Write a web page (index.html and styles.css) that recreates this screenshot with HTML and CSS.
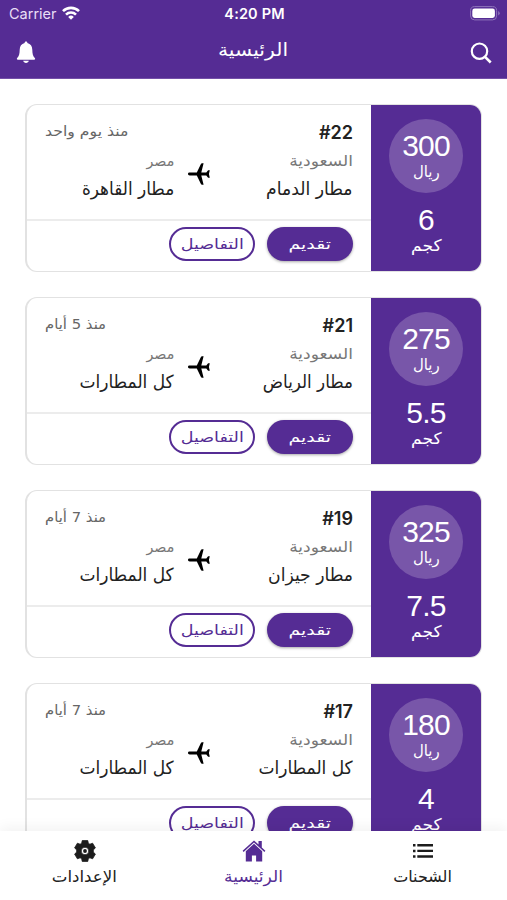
FILE: index.html
```html
<!DOCTYPE html>
<html lang="ar" dir="rtl">
<head>
<meta charset="utf-8">
<title>الرئيسية</title>
<link rel="stylesheet" href="styles.css">
</head>
<body>
<svg width="0" height="0" class="defs" aria-hidden="true">
  <symbol id="plane" viewBox="0 0 24 24"><path d="M1 12c0-.9.7-1.400 1.700-1.400h7.100L13.800 2.200c.3-.6.7-.9 1.300-.9h1.500l-2.300 9.300h5l1.800-2.300h1.700L21.900 12l.9 3.700h-1.700l-1.800-2.300h-5l2.300 9.300h-1.500c-.6 0-1-.3-1.300-.9L9.800 13.400H2.700C1.700 13.400 1 12.900 1 12z"/></symbol>
</svg>
<div class="screen">
  <header class="header">
    <div class="status" dir="ltr">
      <div class="status-side"><span class="carrier">Carrier</span>
        <svg class="wifi" width="18" height="14" viewBox="0 0 18 14"><g fill="none" stroke="#fff" stroke-width="2.600"><path d="M1 5.200a11.300 11.300 0 0 1 16 0"/><path d="M4 8.600a7.100 7.100 0 0 1 10 0"/></g><path d="M9 13.800 6.200 10.900a4 4 0 0 1 5.600 0z" fill="#fff"/></svg>
      </div>
      <span class="time">4:20 PM</span>
      <div class="status-side end">
        <svg width="30" height="15" viewBox="0 0 30 15"><rect x=".6" y=".6" width="26" height="13.300" rx="4" fill="none" stroke="#8f74bb" stroke-width="1"/><rect x="2.300" y="2.600" width="22.600" height="9.300" rx="2.300" fill="#fff"/><path d="M28.200 5v4.500q1.500-.7 1.500-2.250T28.200 5z" fill="#8f74bb"/></svg>
      </div>
    </div>
    <div class="bar" dir="ltr">
      <svg width="20" height="23" viewBox="0 0 20 23" fill="#fff"><path d="M10 .5c.9 0 1.400.6 1.400 1.500 3.200.8 4.800 3.300 4.900 6.700.1 4.300.6 6.400 2.500 8.300.7.8.3 1.700-.7 1.700H1.900c-1 0-1.400-.9-.7-1.700 1.900-1.900 2.400-4 2.500-8.300C3.800 5.300 5.400 2.800 8.600 2c0-.9.500-1.500 1.400-1.500z"/><path d="M7.200 19.700h5.600c-.3 1.400-1.400 2.200-2.800 2.200s-2.500-.8-2.800-2.200z"/></svg>
      <h1 class="title" dir="rtl">الرئيسية</h1>
      <svg width="22" height="22" viewBox="0 0 22 22" fill="none" stroke="#fff" stroke-width="2.200"><circle cx="9.500" cy="9.200" r="7.700"/><path d="m15 14.800 5.700 5.700" stroke-width="2.600"/></svg>
    </div>
  </header>
  <main class="list" id="list"></main>
  <nav class="tabs">
    <a class="tab"><svg width="22" height="22" viewBox="0 0 22 22" fill="#1c1c1c"><path d="M1 4h2.500v2.500H1zM1 9.700h2.500v2.500H1zM1 15.300h2.500v2.500H1zM5.300 4H21v2.400H5.300zM5.300 9.700H21v2.400H5.300zM5.300 15.300H21v2.400H5.300z"/></svg><span class="t-ship">الشحنات</span></a>
    <a class="tab active"><svg width="24" height="22" viewBox="0 0 24 22" fill="#552c94"><path d="M12 .4.600 10.800l1 1.100L12 2.600l10.400 9.300 1-1.100-3.600-3.300V1h-3.300v3.500z"/><path d="m12 3.800-8.200 7.400V21.500h6.100v-6h4.200v6h6.100V11.200z"/></svg><span class="t-home">الرئيسية</span></a>
    <a class="tab"><svg width="22" height="22" viewBox="0 0 22 22"><path fill="#1c1c1c" stroke="#1c1c1c" stroke-width=".8" stroke-linejoin="round" fill-rule="evenodd" d="M8.200.6h5.600l.5 2.700 1.600.9 2.700-1 2.800 4.700-2.100 2v2.200l2.100 2-2.800 4.700-2.700-1-1.600.9-.5 2.700H8.200l-.5-2.700-1.600-.9-2.700 1L.6 14.100l2.100-2V9.900L.6 7.900l2.800-4.700 2.700 1 1.600-.9zM11 7.200a3.800 3.800 0 1 0 0 7.600 3.800 3.800 0 0 0 0-7.600z"/><circle cx="11" cy="11" r="1.900" fill="#1c1c1c"/></svg><span class="t-set">الإعدادات</span></a>
  </nav>
</div>
<script src="app.js"></script>
</body>
</html>
```
FILE: app.js
```js
const trips = [
  { id: 22, price: 300, kg: "6", from: "مطار الدمام", to: "مطار القاهرة", ago: "منذ يوم واحد", k: ["dammam", "cairo", "day"] },
  { id: 21, price: 275, kg: "5.5", from: "مطار الرياض", to: "كل المطارات", ago: "منذ 5 أيام", k: ["riyadh", "all", "days"] },
  { id: 19, price: 325, kg: "7.5", from: "مطار جيزان", to: "كل المطارات", ago: "منذ 7 أيام", k: ["jizan", "all", "days"] },
  { id: 17, price: 180, kg: "4", from: "كل المطارات", to: "كل المطارات", ago: "منذ 7 أيام", k: ["all", "all", "days"] }
];
document.getElementById("list").innerHTML = trips.map(t => `
<article class="card">
  <aside class="panel">
    <div class="circle"><span class="num">${t.price}</span><span class="unit riyal">ريال</span></div>
    <span class="num kg">${t.kg}</span><span class="unit kgm">كجم</span>
  </aside>
  <div class="body">
    <div class="info">
      <div class="from"><b class="id" dir="ltr">#${t.id}</b><span class="country saudi">السعودية</span><span class="airport ${t.k[0]}">${t.from}</span></div>
      <svg class="plane" width="24" height="24"><use href="#plane"/></svg>
      <div class="to"><span class="ago ${t.k[2]}">${t.ago}</span><span class="country egypt">مصر</span><span class="airport ${t.k[1]}">${t.to}</span></div>
    </div>
    <div class="actions"><button class="btn solid"><span>تقديم</span></button><button class="btn outline"><span>التفاصيل</span></button></div>
  </div>
</article>`).join("");
```
FILE: styles.css
```css
* { box-sizing: border-box; }
body { margin: 0; background: #fff; font-family: "DejaVu Sans", sans-serif; color: #222; }
.defs { display: block; }
.screen { width: 507px; height: 900px; display: flex; flex-direction: column; overflow: hidden; }
.header { height: 79px; flex: none; background: #552c94; color: #fff; border-bottom: 1px solid #7450a8; }
.status { height: 27px; display: grid; grid-template-columns: 1fr auto 1fr; align-items: center; padding: 0 7px 0 9px; font: 14.5px/27px Inter, sans-serif; }
.status-side { display: flex; align-items: center; gap: 6px; }
.status-side.end { justify-content: flex-end; }
.carrier { color: #e9def6; }
.wifi { margin-top: -2px; margin-left: -1px; }
.time { font-weight: 600; letter-spacing: .15px; }
.bar { height: 51px; display: flex; align-items: center; justify-content: space-between; padding: 0 15px 0 16px; }
.title { margin: 0; font-size: 18px; font-weight: 400; line-height: 46px; align-self: flex-start; transform: scaleX(1.13); }
.list { flex: 1; min-height: 0; overflow: hidden; padding: 25px 25px 0; display: flex; flex-direction: column; gap: 25px; }
.card { flex: none; width: 457px; height: 168px; display: flex; border: 1px solid #e2e2e2; border-width: 1px 1px 1px 2px; border-radius: 12px; overflow: hidden; background: #fff; }
.panel { width: 110px; flex: none; background: #552c94; color: #fff; display: flex; flex-direction: column; align-items: center; padding-top: 14px; }
.circle { width: 74px; height: 74px; border-radius: 50%; background: #7856a9; display: flex; flex-direction: column; align-items: center; padding-top: 11px; flex: none; }
.num { font: 30px/32px "Liberation Sans", sans-serif; letter-spacing: -.8px; }
.unit { font-size: 16px; line-height: 20px; }
.riyal { transform: scaleX(.93); }
.kgm { transform: scaleX(1.07); }
.num.kg { margin-top: 11px; }
.body { flex: 1; min-width: 0; }
.info { height: 114px; display: grid; grid-template-columns: 142px 24px 1fr; padding: 0 18px; }
.from, .to { display: flex; flex-direction: column; align-items: flex-start; padding-top: 14px; white-space: nowrap; }
.id { font: 600 18px/28px Inter, sans-serif; }
.country { font-size: 15px; line-height: 29px; height: 28px; color: #777; transform-origin: right; }
.airport { font-size: 18px; line-height: 28px; transform-origin: right; }
.saudi { transform: scaleX(1.14); }
.egypt { transform: scaleX(.95); }
.dammam, .jizan { transform: scaleX(.955); }
.riyadh { transform: scaleX(.93); }
.all { transform: scaleX(.945); }
.cairo { transform: scaleX(.94); }
.to { padding-right: 13px; }
.ago { font-size: 14px; line-height: 25px; height: 28px; color: #666; align-self: flex-end; transform-origin: left; }
.day { transform: scaleX(1.12); }
.days { transform: scaleX(1.06); }
.plane { margin-top: 57px; }
.actions { height: 52px; border-top: 2px solid #ececec; display: flex; gap: 12px; padding: 6px 18px; }
.btn { width: 86px; height: 34px; padding: 0; border-radius: 17px; font: 14px/28px "DejaVu Sans", sans-serif; white-space: nowrap; }
.btn span { display: inline-block; }
.solid { border: 0; background: #552c94; color: #fff; box-shadow: 0 1px 3px rgba(0,0,0,.35); }
.solid span { transform: scaleX(1.35); }
.outline { border: 2px solid #552c94; background: #fff; color: #552c94; }
.outline span { transform: scaleX(1.25); }
.tabs { height: 69px; flex: none; display: grid; grid-template-columns: repeat(3, 1fr); background: #fff; box-shadow: 0 -4px 12px rgba(0,0,0,.05); position: relative; }
.tab { display: flex; flex-direction: column; align-items: center; padding-top: 9px; font-size: 16px; line-height: 29px; }
.active { color: #552c94; }
.t-home { transform: scaleX(1.07); }
.t-set { transform: scaleX(1.04); }
```
